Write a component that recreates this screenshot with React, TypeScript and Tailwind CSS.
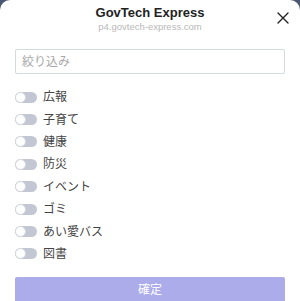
import React from "react";

const items = ["広報", "子育て", "健康", "防災", "イベント", "ゴミ", "あい愛バス", "図書"];

export default function App() {
  return (
    <div className="w-[300px] h-[301px] bg-[#4b5672] overflow-hidden" style={{ fontFamily: '"Liberation Sans", Arial, "Noto Sans CJK JP", sans-serif' }}>
      <div className="bg-white rounded-t-[10px] h-[301px] px-[15px] relative">
        <div className="flex flex-col items-center pt-[5px]">
          <div className="text-[13px] leading-[16px] font-bold text-[#222]">GovTech Express</div>
          <div className="text-[9.5px] leading-[11px] text-[#b8b8b8]">p4.govtech-express.com</div>
        </div>
        <button className="absolute right-[10px] top-[11px] w-[14px] h-[14px]">
          <svg width="14" height="14" viewBox="0 0 14 14" fill="none" stroke="#222" strokeWidth="1.4" strokeLinecap="round">
            <path d="M2 2 L12 12 M12 2 L2 12" />
          </svg>
        </button>
        <div className="mt-[17px] h-[25px] border border-[#d6d9e0] rounded-[2px] flex items-center px-[6px]">
          <span className="text-[12px] text-[#a8a8a8]">絞り込み</span>
        </div>
        <div className="mt-[12px] flex flex-col">
          {items.map((t) => (
            <div key={t} className="flex items-center h-[22.4px]">
              <div className="w-[22px] h-[11px] rounded-full bg-[#c3c7d3] relative">
                <div className="absolute left-0 top-0 w-[11px] h-[11px] rounded-full bg-white border border-[#d3d6de]"></div>
              </div>
              <span className="ml-[6px] text-[12px] text-[#444]">{t}</span>
            </div>
          ))}
        </div>
        <div className="mt-[12px] h-[26px] bg-[#acacea] rounded-[2px] flex items-center justify-center">
          <span className="text-[12px] leading-[14px] text-white">確定</span>
        </div>
      </div>
    </div>
  );
}
